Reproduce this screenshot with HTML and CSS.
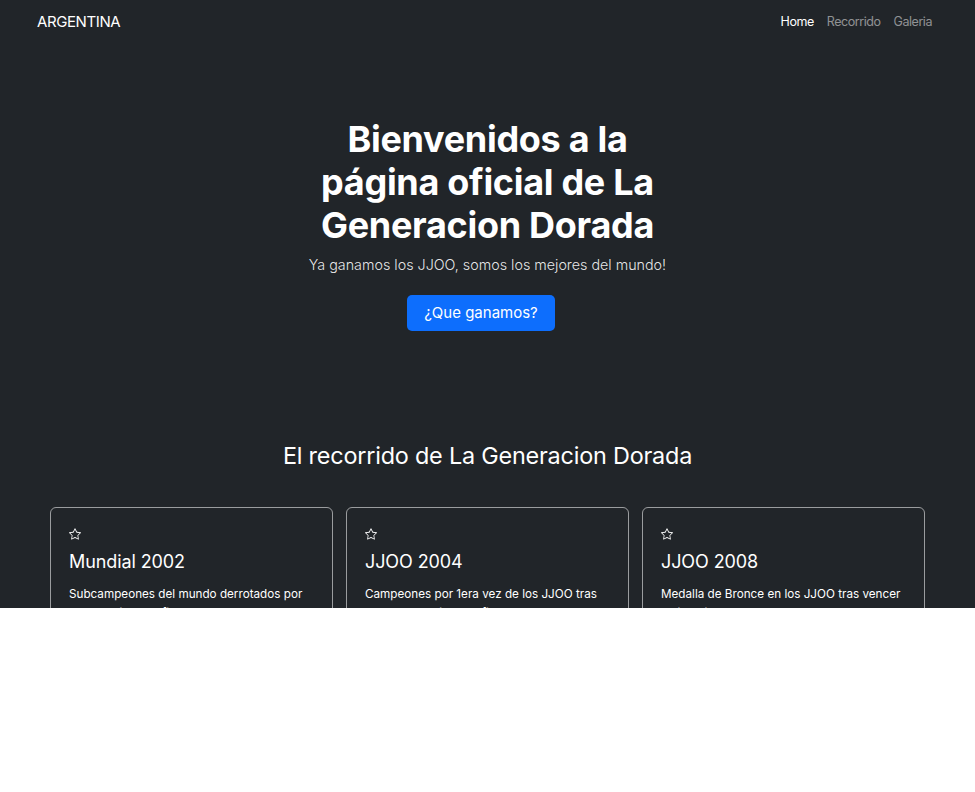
FILE: index.html
```html
<!DOCTYPE html>
<html lang="es">
<head>
<meta charset="utf-8">
<title>Argentina - La Generacion Dorada</title>
<link rel="stylesheet" href="styles.css">
</head>
<body>
<div class="page">
  <header class="navbar">
    <a class="brand" href="#">ARGENTINA</a>
    <nav class="nav">
      <a class="nav-link active" href="#">Home</a>
      <a class="nav-link" href="#">Recorrido</a>
      <a class="nav-link" href="#">Galeria</a>
    </nav>
  </header>

  <section class="hero">
    <h1 class="hero-title">Bienvenidos a la página oficial de La Generacion Dorada</h1>
    <p class="lead">Ya ganamos los JJOO, somos los mejores del mundo!</p>
    <a class="btn" href="#">¿Que ganamos?</a>
  </section>

  <section class="recorrido">
    <h2 class="section-title">El recorrido de La Generacion Dorada</h2>
    <div class="cards">
      <div class="card">
        <svg class="star" viewBox="0 0 16 16" fill="currentColor"><path d="M2.866 14.85c-.078.444.36.791.746.593l4.39-2.256 4.389 2.256c.386.198.824-.149.746-.592l-.83-4.73 3.522-3.356c.33-.314.16-.888-.282-.95l-4.898-.696L8.465.792a.513.513 0 0 0-.927 0L5.354 5.12l-4.898.696c-.441.062-.612.636-.283.95l3.523 3.356-.83 4.73zm4.905-2.767-3.686 1.894.694-3.957a.565.565 0 0 0-.163-.505L1.71 6.745l4.052-.576a.525.525 0 0 0 .393-.288L8 2.223l1.847 3.658a.525.525 0 0 0 .393.288l4.052.575-2.906 2.77a.565.565 0 0 0-.163.506l.694 3.957-3.686-1.894a.503.503 0 0 0-.461 0z"/></svg>
        <h3 class="card-title">Mundial 2002</h3>
        <p class="card-text">Subcampeones del mundo derrotados por Yugoslavia en la final</p>
      </div>
      <div class="card">
        <svg class="star" viewBox="0 0 16 16" fill="currentColor"><path d="M2.866 14.85c-.078.444.36.791.746.593l4.39-2.256 4.389 2.256c.386.198.824-.149.746-.592l-.83-4.73 3.522-3.356c.33-.314.16-.888-.282-.95l-4.898-.696L8.465.792a.513.513 0 0 0-.927 0L5.354 5.12l-4.898.696c-.441.062-.612.636-.283.95l3.523 3.356-.83 4.73zm4.905-2.767-3.686 1.894.694-3.957a.565.565 0 0 0-.163-.505L1.71 6.745l4.052-.576a.525.525 0 0 0 .393-.288L8 2.223l1.847 3.658a.525.525 0 0 0 .393.288l4.052.575-2.906 2.77a.565.565 0 0 0-.163.506l.694 3.957-3.686-1.894a.503.503 0 0 0-.461 0z"/></svg>
        <h3 class="card-title">JJOO 2004</h3>
        <p class="card-text">Campeones por 1era vez de los JJOO tras derrotar a Italia en la final</p>
      </div>
      <div class="card">
        <svg class="star" viewBox="0 0 16 16" fill="currentColor"><path d="M2.866 14.85c-.078.444.36.791.746.593l4.39-2.256 4.389 2.256c.386.198.824-.149.746-.592l-.83-4.73 3.522-3.356c.33-.314.16-.888-.282-.95l-4.898-.696L8.465.792a.513.513 0 0 0-.927 0L5.354 5.12l-4.898.696c-.441.062-.612.636-.283.95l3.523 3.356-.83 4.73zm4.905-2.767-3.686 1.894.694-3.957a.565.565 0 0 0-.163-.505L1.71 6.745l4.052-.576a.525.525 0 0 0 .393-.288L8 2.223l1.847 3.658a.525.525 0 0 0 .393.288l4.052.575-2.906 2.77a.565.565 0 0 0-.163.506l.694 3.957-3.686-1.894a.503.503 0 0 0-.461 0z"/></svg>
        <h3 class="card-title">JJOO 2008</h3>
        <p class="card-text">Medalla de Bronce en los JJOO tras vencer a Lituania</p>
      </div>
    </div>
  </section>
</div>
</body>
</html>
```

FILE: styles.css
```css
* { box-sizing: border-box; }

html, body {
  margin: 0;
  padding: 0;
  background: #ffffff;
}

body {
  font-family: Inter, "Noto Sans", "Liberation Sans", sans-serif;
  color: #ffffff;
}

.page {
  background: #212529;
  height: 608px;
  overflow: hidden;
}

.navbar {
  display: flex;
  justify-content: space-between;
  align-items: center;
  height: 42px;
  padding: 0 43px 0 37px;
}

.brand {
  color: #ffffff;
  text-decoration: none;
  font-size: 15px;
  letter-spacing: -0.4px;
}

.nav {
  display: flex;
  gap: 13px;
}

.nav-link {
  color: rgba(255, 255, 255, 0.5);
  text-decoration: none;
  font-size: 12.5px;
  letter-spacing: -0.45px;
}

.nav-link.active {
  color: #ffffff;
}

.hero {
  display: flex;
  flex-direction: column;
  align-items: center;
  text-align: center;
  padding-top: 76px;
}

.hero-title {
  margin: 0;
  max-width: 370px;
  font-size: 36px;
  font-weight: 700;
  line-height: 1.2;
  letter-spacing: -0.3px;
}

.lead {
  margin: 8px 0 0;
  font-size: 14.3px;
  font-weight: 300;
  color: rgba(255, 255, 255, 0.9);
}

.btn {
  margin-top: 22px;
  margin-right: 13px;
  display: inline-block;
  background: #0d6efd;
  color: #ffffff;
  text-decoration: none;
  font-size: 15px;
  width: 148px;
  height: 36px;
  line-height: 36px;
  border-radius: 5px;
}

.recorrido {
  padding: 0 50px;
}

.section-title {
  margin: 111px 0 0;
  text-align: center;
  font-size: 23.4px;
  font-weight: 400;
  line-height: 1.2;
  letter-spacing: -0.2px;
}

.cards {
  display: grid;
  grid-template-columns: repeat(3, 1fr);
  gap: 13px;
  margin-top: 37px;
}

.card {
  border: 1px solid rgba(255, 255, 255, 0.55);
  border-radius: 6px;
  padding: 20px 18px 18px;
}

.star {
  display: block;
  width: 12px;
  height: 12px;
}

.card-title {
  margin: 11px 0 0;
  font-size: 18px;
  font-weight: 400;
  line-height: 1.2;
  letter-spacing: -0.1px;
}

.card-text {
  margin: 13px 0 0;
  font-size: 11.7px;
  line-height: 1.6;
}
```
